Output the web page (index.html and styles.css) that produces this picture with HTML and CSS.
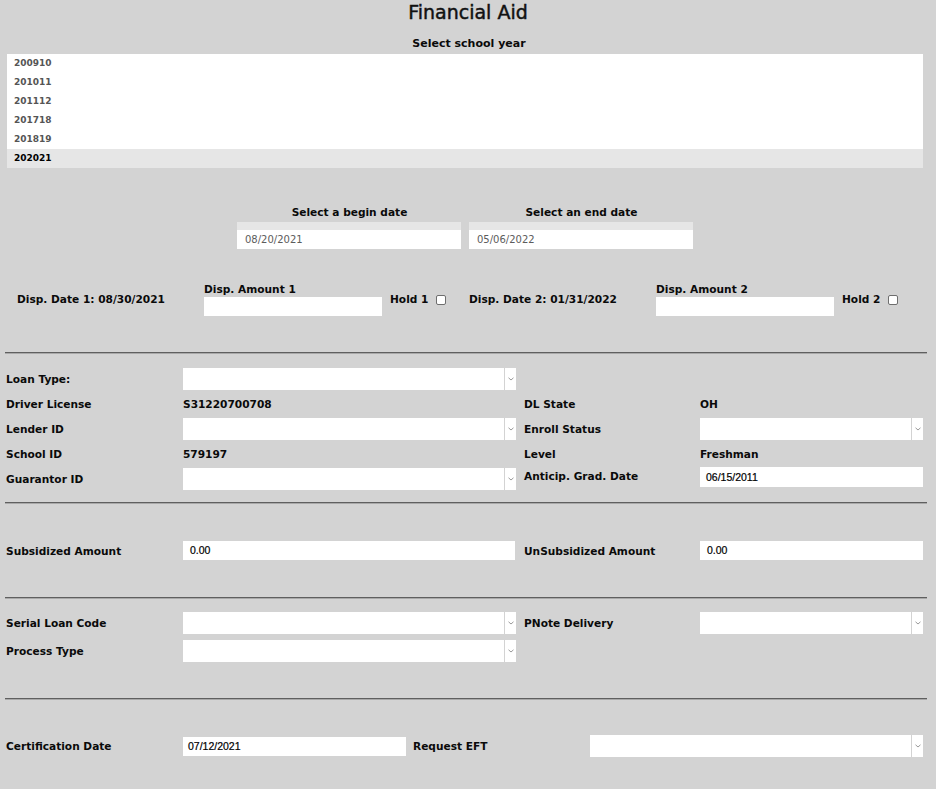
FILE: index.html
```html
<!DOCTYPE html>
<html lang="en">
<head>
<meta charset="utf-8">
<title>Financial Aid</title>
<link rel="stylesheet" href="styles.css">
</head>
<body>
<h1 class="title">Financial Aid</h1>
<div class="year-label">Select school year</div>
<div class="listbox">
  <div class="opt">200910</div>
  <div class="opt">201011</div>
  <div class="opt">201112</div>
  <div class="opt">201718</div>
  <div class="opt">201819</div>
  <div class="opt selected">202021</div>
</div>

<div class="dates">
  <div class="date-col">
    <div class="date-label">Select a begin date</div>
    <div class="date-box"><div class="date-strip"></div><div class="date-value">08/20/2021</div></div>
  </div>
  <div class="date-col">
    <div class="date-label">Select an end date</div>
    <div class="date-box"><div class="date-strip"></div><div class="date-value">05/06/2022</div></div>
  </div>
</div>

<div class="disp-row">
  <div class="label">Disp. Date 1: 08/30/2021</div>
  <div class="amount"><div class="label">Disp. Amount 1</div><div class="amount-field"></div></div>
  <div class="hold"><span class="label">Hold 1</span><span class="check"></span></div>
  <div class="label">Disp. Date 2: 01/31/2022</div>
  <div class="amount"><div class="label">Disp. Amount 2</div><div class="amount-field"></div></div>
  <div class="hold"><span class="label">Hold 2</span><span class="check"></span></div>
</div>

<div class="rule rule-1"></div>

<div class="grid loan-grid">
  <div class="label">Loan Type:</div>
  <div class="select select-wide"><span class="select-field"></span><span class="select-arrow"><svg width="6" height="4" viewBox="0 0 6 4"><polyline points="0.5,0.8 3,3 5.5,0.8" fill="none" stroke="#9a9a9a" stroke-width="1"/></svg></span></div>
  <div></div>
  <div></div>

  <div class="label">Driver License</div>
  <div class="label">S31220700708</div>
  <div class="label">DL State</div>
  <div class="label">OH</div>

  <div class="label">Lender ID</div>
  <div class="select select-wide"><span class="select-field"></span><span class="select-arrow"><svg width="6" height="4" viewBox="0 0 6 4"><polyline points="0.5,0.8 3,3 5.5,0.8" fill="none" stroke="#9a9a9a" stroke-width="1"/></svg></span></div>
  <div class="label">Enroll Status</div>
  <div class="select"><span class="select-field"></span><span class="select-arrow"><svg width="6" height="4" viewBox="0 0 6 4"><polyline points="0.5,0.8 3,3 5.5,0.8" fill="none" stroke="#9a9a9a" stroke-width="1"/></svg></span></div>

  <div class="label">School ID</div>
  <div class="label">579197</div>
  <div class="label">Level</div>
  <div class="label">Freshman</div>

  <div class="label">Guarantor ID</div>
  <div class="select select-wide"><span class="select-field"></span><span class="select-arrow"><svg width="6" height="4" viewBox="0 0 6 4"><polyline points="0.5,0.8 3,3 5.5,0.8" fill="none" stroke="#9a9a9a" stroke-width="1"/></svg></span></div>
  <div class="label grad-label">Anticip. Grad. Date</div>
  <div class="text-field grad-field">06/15/2011</div>
</div>

<div class="rule rule-2"></div>

<div class="grid amount-grid">
  <div class="label">Subsidized Amount</div>
  <div class="text-field sub-field">0.00</div>
  <div class="label">UnSubsidized Amount</div>
  <div class="text-field">0.00</div>
</div>

<div class="rule rule-3"></div>

<div class="grid serial-grid">
  <div class="label">Serial Loan Code</div>
  <div class="select select-wide"><span class="select-field"></span><span class="select-arrow"><svg width="6" height="4" viewBox="0 0 6 4"><polyline points="0.5,0.8 3,3 5.5,0.8" fill="none" stroke="#9a9a9a" stroke-width="1"/></svg></span></div>
  <div class="label">PNote Delivery</div>
  <div class="select"><span class="select-field"></span><span class="select-arrow"><svg width="6" height="4" viewBox="0 0 6 4"><polyline points="0.5,0.8 3,3 5.5,0.8" fill="none" stroke="#9a9a9a" stroke-width="1"/></svg></span></div>

  <div class="label">Process Type</div>
  <div class="select select-wide"><span class="select-field"></span><span class="select-arrow"><svg width="6" height="4" viewBox="0 0 6 4"><polyline points="0.5,0.8 3,3 5.5,0.8" fill="none" stroke="#9a9a9a" stroke-width="1"/></svg></span></div>
  <div></div>
  <div></div>
</div>

<div class="rule rule-4"></div>

<div class="grid cert-grid">
  <div class="label">Certification Date</div>
  <div class="text-field cert-field">07/12/2021</div>
  <div class="label">Request EFT</div>
  <div class="select"><span class="select-field"></span><span class="select-arrow"><svg width="6" height="4" viewBox="0 0 6 4"><polyline points="0.5,0.8 3,3 5.5,0.8" fill="none" stroke="#9a9a9a" stroke-width="1"/></svg></span></div>
</div>
</body>
</html>
```

FILE: styles.css
```css
html, body {
  margin: 0;
  padding: 0;
}

body {
  background: #d3d3d3;
  color: #0a0a0a;
  font-family: "DejaVu Sans", "Noto Sans", sans-serif;
  font-weight: bold;
  font-size: 10.6px;
  width: 936px;
  height: 789px;
  overflow: hidden;
}

.title {
  margin: 0;
  font-size: 19px;
  font-weight: normal;
  line-height: 24px;
  text-align: center;
  color: #111;
  padding-left: 0;
  -webkit-text-stroke: 0.45px #111;
}

.year-label {
  margin-top: 13px;
  font-size: 11px;
  line-height: 14px;
  text-align: center;
  padding-left: 2px;
}

.listbox {
  margin: 3px 13px 0 7px;
  background: #fff;
}

.opt {
  height: 19px;
  line-height: 19px;
  padding-left: 7px;
  font-size: 9px;
  color: #555;
}

.opt.selected {
  background: #e6e6e6;
  color: #000;
}

.dates {
  margin: 37px 13px 0 7px;
  display: flex;
  justify-content: center;
  gap: 8px;
}

.date-col {
  width: 224px;
  display: flex;
  flex-direction: column;
}

.date-label {
  font-size: 10.6px;
  line-height: 14px;
  text-align: center;
  padding-left: 1px;
}

.date-box {
  margin-top: 3px;
  display: flex;
  flex-direction: column;
}

.date-strip {
  height: 8px;
  background: #e6e6e6;
}

.date-value {
  height: 19px;
  line-height: 19px;
  background: #fff;
  padding-left: 8px;
  font-size: 10px;
  font-weight: normal;
  color: #5c5c5c;
}

.label {
  line-height: 14px;
  white-space: nowrap;
}

.disp-row {
  margin-top: 33px;
  padding-left: 17px;
  display: grid;
  grid-template-columns: 187px 186px 79px 187px 186px auto;
  align-items: center;
  height: 34px;
}

.amount {
  display: flex;
  flex-direction: column;
  gap: 1px;
}

.amount-field {
  width: 178px;
  height: 19px;
  background: #fff;
}

.hold {
  display: flex;
  align-items: center;
  gap: 8px;
}

.check {
  width: 8px;
  height: 8px;
  border: 1px solid #6e6e6e;
  border-radius: 2px;
  background: #fff;
  margin-top: 1px;
}

.rule {
  margin: 0 9px 0 5px;
  border-top: 1px solid #5f5f5f;
  border-bottom: 1px solid #a9a9a9;
}

.rule-1 { margin-top: 36px; }
.rule-2 { margin-top: 12px; }
.rule-3 { margin-top: 34px; }
.rule-4 { margin-top: 36px; }

.grid {
  display: grid;
  padding-left: 6px;
  align-items: center;
}

.loan-grid {
  margin-top: 14px;
  grid-template-columns: 177px 341px 176px 223px;
  grid-auto-rows: 22px;
  row-gap: 3px;
}

.amount-grid {
  margin-top: 34px;
  grid-template-columns: 177px 341px 176px 223px;
  grid-auto-rows: 25px;
}

.serial-grid {
  margin-top: 13px;
  grid-template-columns: 177px 341px 176px 223px;
  grid-auto-rows: 22px;
  row-gap: 6px;
}

.cert-grid {
  margin-top: 35px;
  grid-template-columns: 177px 230px 177px 333px;
  grid-auto-rows: 22px;
}

.select {
  display: flex;
  gap: 1px;
  height: 22px;
}

.select-wide {
  width: 333px;
}

.select-field {
  flex: 1;
  background: #fff;
}

.select-arrow {
  width: 11px;
  background: #fff;
  display: flex;
  align-items: center;
  justify-content: center;
}

.text-field {
  height: 19px;
  line-height: 19px;
  background: #fff;
  padding-left: 7px;
  font-family: "Liberation Sans", Arial, sans-serif;
  font-weight: normal;
  font-size: 10.5px;
  color: #000;
  -webkit-text-stroke: 0.2px #000;
}

.grad-label {
  align-self: start;
  margin-top: 1px;
}

.grad-field {
  height: 20px;
  line-height: 20px;
  padding-left: 6px;
  align-self: start;
  margin-top: -1px;
}

.sub-field {
  width: 325px;
}

.cert-field {
  width: 218px;
  padding-left: 5px;
}
```
